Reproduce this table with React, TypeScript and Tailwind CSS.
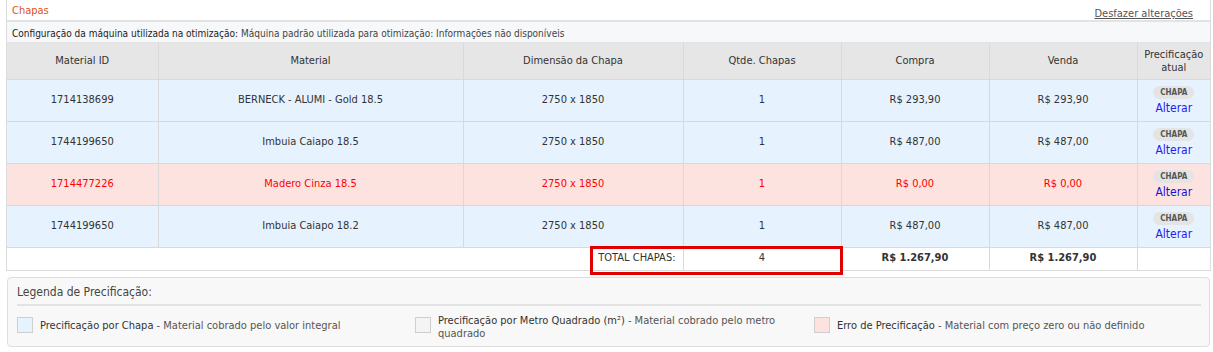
import React from "react";

type Row = {
  id: string;
  material: string;
  dim: string;
  qtd: string;
  compra: string;
  venda: string;
  error?: boolean;
};

const rows: Row[] = [
  { id: "1714138699", material: "BERNECK - ALUMI - Gold 18.5", dim: "2750 x 1850", qtd: "1", compra: "R$ 293,90", venda: "R$ 293,90" },
  { id: "1744199650", material: "Imbuia Caiapo 18.5", dim: "2750 x 1850", qtd: "1", compra: "R$ 487,00", venda: "R$ 487,00" },
  { id: "1714477226", material: "Madero Cinza 18.5", dim: "2750 x 1850", qtd: "1", compra: "R$ 0,00", venda: "R$ 0,00", error: true },
  { id: "1744199650", material: "Imbuia Caiapo 18.2", dim: "2750 x 1850", qtd: "1", compra: "R$ 487,00", venda: "R$ 487,00" },
];

const headers = ["Material ID", "Material", "Dimensão da Chapa", "Qtde. Chapas", "Compra", "Venda"];

export default function App() {
  return (
    <div className="w-[1213px] h-[352px] bg-white text-[11px] text-[#333] font-['Tahoma','DejaVu_Sans_Condensed','Liberation_Sans',sans-serif] overflow-hidden">
      <div className="ml-[6px] mr-[2px] border-x border-[#dcdcdc]">
        <div className="h-[22px] flex items-start justify-between px-[5px] border-b-2 border-[#e3e3e3]">
          <span className="text-[#e2521d] pt-[3px]">Chapas</span>
          <span className="text-[#555] underline pt-[6px] pr-[12px]">Desfazer alterações</span>
        </div>
        <div className="h-[21px] bg-[#f7f8fa] flex items-center pt-[2px] px-[5px] text-[10px] text-[#222] border-b border-[#e3e3e3]">
          <span>Configuração da máquina utilizada na otimização: </span>
          <span className="text-[#444] ml-[3px]">Máquina padrão utilizada para otimização: Informações não disponíveis</span>
        </div>
        <table className="w-full table-fixed border-collapse">
          <colgroup>
            <col className="w-[151px]" />
            <col className="w-[305px]" />
            <col className="w-[220px]" />
            <col className="w-[158px]" />
            <col className="w-[148px]" />
            <col className="w-[148px]" />
            <col className="w-[73px]" />
          </colgroup>
          <thead>
            <tr className="h-[36px] bg-[#e6e6e6]">
              {headers.map((h, i) => (
                <th key={i} className="font-normal text-[#333] border border-[#d9d9d9] border-t-0 first:border-l-0 align-middle text-center">
                  {h}
                </th>
              ))}
              <th className="font-normal text-[#333] border border-[#d9d9d9] border-t-0 border-r-0 leading-[13px] text-center">
                Precificação
                <br />
                atual
              </th>
            </tr>
          </thead>
          <tbody>
            {rows.map((r, i) => {
              const cell = `border border-[#d9d9d9] text-center align-middle ${r.error ? "text-[#f00]" : ""}`;
              return (
                <tr key={i} className={`h-[42px] ${r.error ? "bg-[#fde3e0]" : "bg-[#e6f2fe]"}`}>
                  <td className={`${cell} border-l-0`}>{r.id}</td>
                  <td className={cell}>{r.material}</td>
                  <td className={cell}>{r.dim}</td>
                  <td className={cell}>{r.qtd}</td>
                  <td className={cell}>{r.compra}</td>
                  <td className={cell}>{r.venda}</td>
                  <td className="border border-[#d9d9d9] border-r-0 text-center align-middle">
                    <div className="flex flex-col items-center pt-[1px]">
                      <span className="bg-[#e4e4e4] rounded-full px-[7px] h-[13px] leading-[13px] text-[8px] font-bold text-[#555]">CHAPA</span>
                      <span className={`text-[12px] leading-[16px] mt-[1px] ${r.error ? "text-[#1a0fe0]" : "text-[#2b1bf2]"}`}>Alterar</span>
                    </div>
                  </td>
                </tr>
              );
            })}
            <tr className="h-[23px] bg-white">
              <td className="border border-[#d9d9d9] border-l-0 border-r-0" />
              <td className="border border-[#d9d9d9] border-l-0 border-r-0" />
              <td className="border border-[#d9d9d9] border-l-0 text-right pr-[7px]">TOTAL CHAPAS:</td>
              <td className="border border-[#d9d9d9] text-center">4</td>
              <td className="border border-[#d9d9d9] text-center font-bold">R$ 1.267,90</td>
              <td className="border border-[#d9d9d9] text-center font-bold">R$ 1.267,90</td>
              <td className="border border-[#d9d9d9] border-r-0" />
            </tr>
          </tbody>
        </table>
      </div>
      <div className="relative">
        <div className="absolute left-[590px] top-[-25px] w-[253px] h-[29px] border-[3px] border-[#e00000]" />
      </div>
      <div className="ml-[7px] mr-[3px] mt-[6px] h-[70px] bg-[#f8f8f8] border border-[#dedede] rounded-[4px] pl-[9px] pr-[8px]">
        <div className="h-[28px] flex items-end pb-[3px] text-[12px] text-[#444] border-b-2 border-[#e2e2e2]">
          Legenda de Precificação:
        </div>
        <div className="grid grid-cols-[398px_399px_1fr] pt-[8px]">
          <div className="flex items-start gap-[7px]">
            <span className="mt-[3px] w-[16px] h-[16px] shrink-0 bg-[#e6f2fe] border border-[#cfcfcf]" />
            <span className="pt-[4px]">
              <span className="text-[#333]">Precificação por Chapa</span>
              <span className="text-[#555]"> - Material cobrado pelo valor integral</span>
            </span>
          </div>
          <div className="flex items-start gap-[7px]">
            <span className="mt-[3px] w-[16px] h-[16px] shrink-0 bg-[#f4f4f4] border border-[#cfcfcf]" />
            <span className="leading-[13px] pr-[30px]">
              <span className="text-[#333]">Precificação por Metro Quadrado (m²)</span>
              <span className="text-[#555]"> - Material cobrado pelo metro quadrado</span>
            </span>
          </div>
          <div className="flex items-start gap-[7px]">
            <span className="mt-[3px] w-[16px] h-[16px] shrink-0 bg-[#fde3e0] border border-[#cfcfcf]" />
            <span className="pt-[4px]">
              <span className="text-[#333]">Erro de Precificação</span>
              <span className="text-[#555]"> - Material com preço zero ou não definido</span>
            </span>
          </div>
        </div>
      </div>
    </div>
  );
}
